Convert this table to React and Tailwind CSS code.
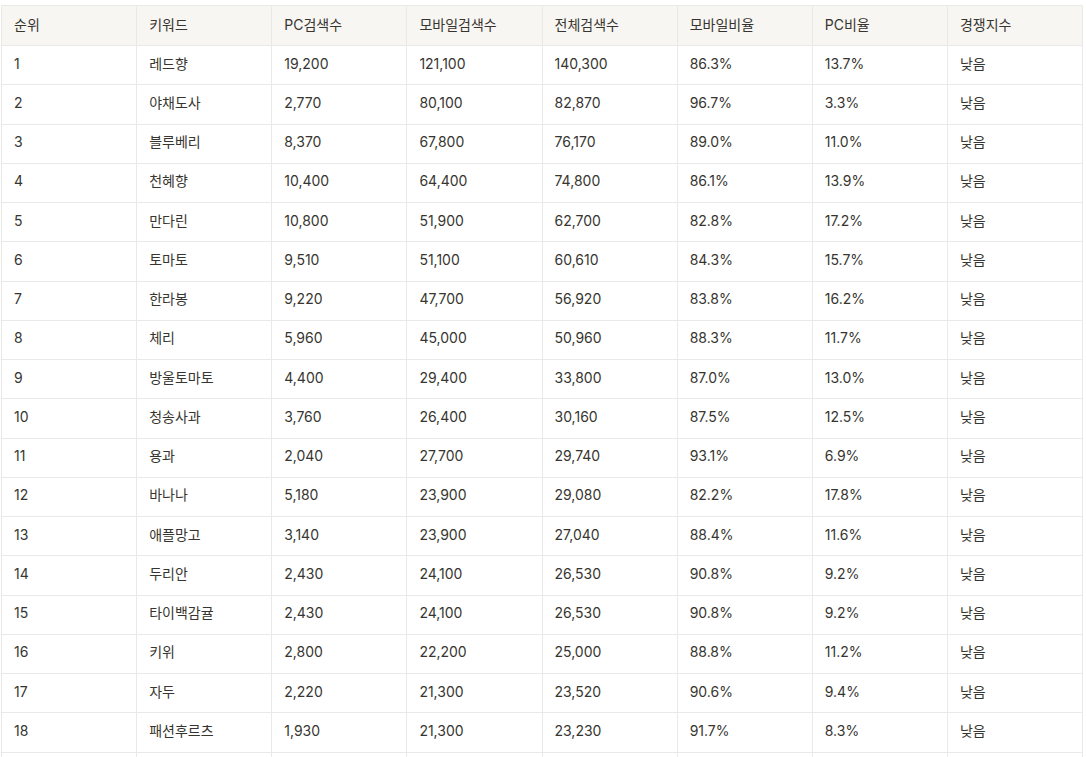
const headers = ['순위', '키워드', 'PC검색수', '모바일검색수', '전체검색수', '모바일비율', 'PC비율', '경쟁지수'];

const rows = [
    ['레드향', '19,200', '121,100', '140,300', '86.3%', '13.7%'],
    ['야채도사', '2,770', '80,100', '82,870', '96.7%', '3.3%'],
    ['블루베리', '8,370', '67,800', '76,170', '89.0%', '11.0%'],
    ['천혜향', '10,400', '64,400', '74,800', '86.1%', '13.9%'],
    ['만다린', '10,800', '51,900', '62,700', '82.8%', '17.2%'],
    ['토마토', '9,510', '51,100', '60,610', '84.3%', '15.7%'],
    ['한라봉', '9,220', '47,700', '56,920', '83.8%', '16.2%'],
    ['체리', '5,960', '45,000', '50,960', '88.3%', '11.7%'],
    ['방울토마토', '4,400', '29,400', '33,800', '87.0%', '13.0%'],
    ['청송사과', '3,760', '26,400', '30,160', '87.5%', '12.5%'],
    ['용과', '2,040', '27,700', '29,740', '93.1%', '6.9%'],
    ['바나나', '5,180', '23,900', '29,080', '82.2%', '17.8%'],
    ['애플망고', '3,140', '23,900', '27,040', '88.4%', '11.6%'],
    ['두리안', '2,430', '24,100', '26,530', '90.8%', '9.2%'],
    ['타이백감귤', '2,430', '24,100', '26,530', '90.8%', '9.2%'],
    ['키위', '2,800', '22,200', '25,000', '88.8%', '11.2%'],
    ['자두', '2,220', '21,300', '23,520', '90.6%', '9.4%'],
    ['패션후르츠', '1,930', '21,300', '23,230', '91.7%', '8.3%'],
];

const cell = 'border border-[#e9e9e7] px-3 pb-1';

const App = () => {
    return (
        <div
            className="h-[757px] overflow-hidden bg-white pt-[5px] pl-px text-[#37352f]"
            style={{ fontFamily: 'Inter, "Noto Sans CJK KR", sans-serif' }}
        >
            <table className="w-[1082px] table-fixed border-collapse text-[14px]">
                <thead>
                    <tr className="h-[40px] bg-[#f7f6f3]">
                        {headers.map((h) => (
                            <th key={h} className="border border-[#e9e9e7] px-3 pb-[3px] text-left font-normal">
                                {h}
                            </th>
                        ))}
                    </tr>
                </thead>
                <tbody>
                    {/* body rows sit ~39.3px apart in the shot */}
                    {rows.map((r, i) => (
                        <tr key={i} className="h-[39.25px]">
                            <td className={cell}>{i + 1}</td>
                            {r.map((c, j) => (
                                <td key={j} className={cell}>{c}</td>
                            ))}
                            <td className={cell}>낮음</td>
                        </tr>
                    ))}
                    {/* next row only peeks in at the bottom edge */}
                    <tr className="h-[39.25px]">
                        {headers.map((h) => (
                            <td key={h} className={cell}></td>
                        ))}
                    </tr>
                </tbody>
            </table>
        </div>
    );
};

export default App;
